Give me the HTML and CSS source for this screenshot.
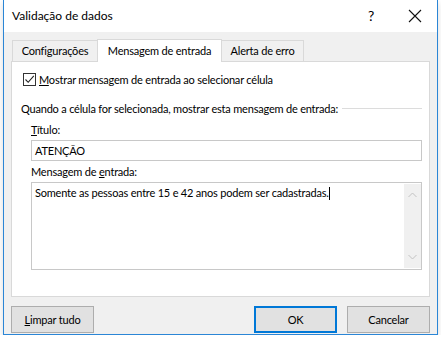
FILE: index.html
```html
<!DOCTYPE html>
<html lang="pt-BR">
<head>
    <meta charset="UTF-8">
    <title>Validação de dados</title>
    <link rel="stylesheet" href="styles.css">
</head>
<body>
    <div class="dialog">
        <div class="titlebar">
            <span class="title">Validação de dados</span>
            <div class="caption-btns">
                <span class="cap-btn">?</span>
                <span class="cap-btn">
                    <svg width="14" height="14" viewBox="0 0 14 14"><path d="M1 1 L13 13 M13 1 L1 13" stroke="#111" stroke-width="1.1" fill="none"/></svg>
                </span>
            </div>
        </div>

        <div class="content">
            <ul class="tabs">
                <li class="tab tab-config">Configurações</li>
                <li class="tab tab-msg active">Mensagem de entrada</li>
                <li class="tab tab-alert">Alerta de erro</li>
            </ul>

            <div class="panel">
                <label class="check-row">
                    <span class="checkbox">
                        <svg width="11" height="11" viewBox="0 0 11 11"><path d="M1.5 5.5 L4.2 8.3 L9.8 1.8" stroke="#222" stroke-width="1.1" fill="none"/></svg>
                    </span>
                    <span><u>M</u>ostrar mensagem de entrada ao selecionar célula</span>
                </label>

                <div class="group-title">Quando a célula for selecionada, mostrar esta mensagem de entrada:</div>

                <div class="field">
                    <div class="field-label"><u>T</u>ítulo:</div>
                    <div class="input">ATENÇÃO</div>
                </div>

                <div class="field">
                    <div class="field-label">Mensagem de <u>e</u>ntrada:</div>
                    <div class="textbox">
                        <div class="textbox-text">Somente as pessoas entre 15 e 42 anos podem ser cadastradas.<span class="caret"></span></div>
                        <div class="scrollbar">
                            <svg width="9" height="6" viewBox="0 0 9 6"><path d="M0.5 5 L4.5 1 L8.5 5" stroke="#c2c2c2" stroke-width="1" fill="none"/></svg>
                            <svg width="9" height="6" viewBox="0 0 9 6"><path d="M0.5 1 L4.5 5 L8.5 1" stroke="#c2c2c2" stroke-width="1" fill="none"/></svg>
                        </div>
                    </div>
                </div>
            </div>

            <div class="buttons">
                <button class="btn"><u>L</u>impar tudo</button>
                <div class="btn-group">
                    <button class="btn btn-default">OK</button>
                    <button class="btn">Cancelar</button>
                </div>
            </div>
        </div>
    </div>
</body>
</html>
```

FILE: styles.css
```css
* {
    box-sizing: border-box;
}
body {
    margin: 0;
    background: #fff;
    font-family: 'Segoe UI', Lato, 'Noto Sans', Arial, sans-serif;
    font-size: 11px;
    letter-spacing: -0.2px;
    color: #000;
}
.dialog {
    width: 435px;
    margin-left: 3px;
    background: #f0f0f0;
    border: 1px solid #2b86d6;
    border-top: none;
    box-shadow: 0 3px 6px rgba(0, 0, 0, 0.15);
}
.titlebar {
    height: 32px;
    background: #fff;
    display: flex;
    align-items: center;
    justify-content: space-between;
    padding-left: 8px;
}
.title {
    font-size: 12px;
    letter-spacing: 0;
    margin-top: -2px;
}
.caption-btns {
    display: flex;
    height: 100%;
}
.cap-btn {
    width: 44px;
    display: flex;
    align-items: center;
    justify-content: center;
    font-size: 14px;
    margin-top: -1px;
}
.content {
    padding: 7px 7px 1px 7px;
}
.tabs {
    list-style: none;
    margin: 0;
    padding: 0 0 0 1px;
    display: flex;
    align-items: flex-end;
    height: 22px;
}
.tab {
    height: 21px;
    line-height: 20px;
    text-align: center;
    border: 1px solid #d9d9d9;
    border-bottom: none;
    background: #f0f0f0;
    margin-right: -1px;
}
.tab-config {
    width: 86px;
}
.tab-msg {
    width: 125px;
}
.tab-alert {
    width: 83px;
}
.tab.active {
    height: 23px;
    line-height: 22px;
    background: #fff;
    position: relative;
    z-index: 1;
    margin-bottom: -1px;
}
.panel {
    background: #fff;
    border: 1px solid #d9d9d9;
    height: 236px;
    padding: 11px 7px 0 11px;
}
.check-row {
    display: flex;
    align-items: center;
    gap: 3px;
    height: 13px;
}
.checkbox {
    width: 13px;
    height: 13px;
    border: 1px solid #333;
    display: flex;
    align-items: center;
    justify-content: center;
}
.group-title {
    display: flex;
    align-items: center;
    height: 16px;
    margin-top: 14px;
    margin-left: -2px;
}
.group-title::after {
    content: "";
    flex: 1;
    border-top: 1px solid #dcdcdc;
    margin-left: 4px;
}
.field {
    margin-left: 8px;
}
.field-label {
    height: 16px;
    line-height: 16px;
    margin-top: 6px;
}
.field + .field .field-label {
    margin-top: 3px;
}
.input {
    height: 21px;
    line-height: 19px;
    border: 1px solid #c8c8c8;
    padding-left: 3px;
    margin-top: 2px;
}
.textbox {
    height: 88px;
    border: 1px solid #c8c8c8;
    margin-top: 2px;
    display: flex;
}
.textbox-text {
    flex: 1;
    padding: 3px 0 0 3px;
}
.caret {
    display: inline-block;
    width: 1px;
    height: 13px;
    background: #000;
    vertical-align: -3px;
}
.scrollbar {
    width: 17px;
    margin: 1px 0;
    background: #f0f0f0;
    display: flex;
    flex-direction: column;
    justify-content: space-between;
    align-items: center;
    padding: 8px 0;
}
.buttons {
    display: flex;
    justify-content: space-between;
    margin-top: 9px;
}
.btn-group {
    display: flex;
    gap: 10px;
}
.btn {
    width: 83px;
    height: 27px;
    background: #e1e1e1;
    border: 1px solid #adadad;
    font-family: inherit;
    font-size: 11px;
    letter-spacing: -0.2px;
    color: #000;
    padding: 0;
}
.btn-default {
    border: 2px solid #0078d7;
}
```
